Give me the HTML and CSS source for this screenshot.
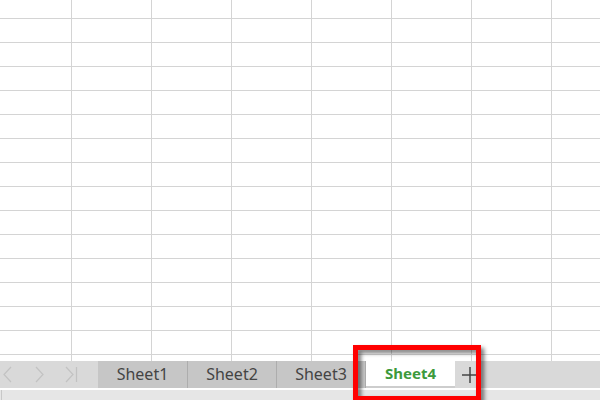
FILE: index.html
```html
<!DOCTYPE html>
<html lang="zh-CN">
<head>
	<meta charset="UTF-8">
	<title>工作表标签</title>
	<link rel="stylesheet" href="styles.css">
</head>
<body>
	<div id="book">
		<div id="sheet"></div>

		<div id="tabbar">
			<div class="nav">
				<svg width="98" height="27" viewBox="0 0 98 27">
					<polyline points="11,6 4,13.5 11,21" />
					<polyline points="36,6 43,13.5 36,21" />
					<polyline points="66,6 73,13.5 66,21" />
					<line x1="76.5" y1="6" x2="76.5" y2="21" />
				</svg>
			</div>
			<span class="tab">Sheet1</span>
			<span class="tab">Sheet2</span>
			<span class="tab">Sheet3</span>
			<span class="tab on">Sheet4</span>
			<a href="javascript:;" class="add">
				<svg width="16" height="16" viewBox="0 0 16 16">
					<line x1="8" y1="0" x2="8" y2="16" />
					<line x1="0" y1="8" x2="16" y2="8" />
				</svg>
			</a>
		</div>

		<div id="scroll"><span class="handle"></span></div>

		<div class="mark"></div>
	</div>
</body>
</html>
```

FILE: styles.css
```css
* {
	margin: 0;
	padding: 0;
	text-decoration: none;
}
body {
	width: 600px;
	height: 400px;
	overflow: hidden;
	background: #fff;
	font-family: "Noto Sans", "Liberation Sans", "Noto Sans CJK SC", sans-serif;
}
#book {
	position: relative;
	width: 600px;
	height: 400px;
}
#sheet {
	height: 361px;
	background-color: #fff;
	background-image:
		linear-gradient(to right, #d4d4d4 1px, transparent 1px),
		linear-gradient(to bottom, #d4d4d4 1px, transparent 1px);
	background-size: 80px 24px;
	background-position: 71px 0, 0 18px;
}
#tabbar {
	display: flex;
	height: 27px;
	background: #d9d9d9;
}
.nav {
	width: 98px;
	height: 27px;
}
.nav svg {
	display: block;
	fill: none;
	stroke: #c2c2c2;
	stroke-width: 1.2;
}
.tab {
	width: 89px;
	height: 27px;
	line-height: 26px;
	text-align: center;
	font-size: 16px;
	color: #444;
	background: #c6c6c6;
	border-right: 1px solid #adadad;
	box-sizing: border-box;
}
.tab:first-of-type {
	width: 90px;
}
.tab.on {
	height: 25px;
	line-height: 25px;
	background: #fff;
	color: #3c9a3c;
	font-weight: bold;
	font-size: 15px;
	border-right: 0;
	border-bottom: 2px solid #cdcdcd;
	height: 27px;
}
.add {
	display: flex;
	align-items: center;
	justify-content: center;
	width: 30px;
	height: 27px;
}
.add svg {
	stroke: #444;
	stroke-width: 1.5;
}
#scroll {
	height: 12px;
	background: #e6e6e6;
}
#scroll .handle {
	display: block;
	width: 1px;
	height: 10px;
	margin: 2px 0 0 1px;
	background: #c8c8c8;
}
.mark {
	position: absolute;
	left: 353px;
	top: 345px;
	width: 128px;
	height: 56px;
	border: 5px solid #ff0000;
	box-sizing: border-box;
	filter: drop-shadow(3px 3px 2px rgba(0, 0, 0, 0.55));
}
```
